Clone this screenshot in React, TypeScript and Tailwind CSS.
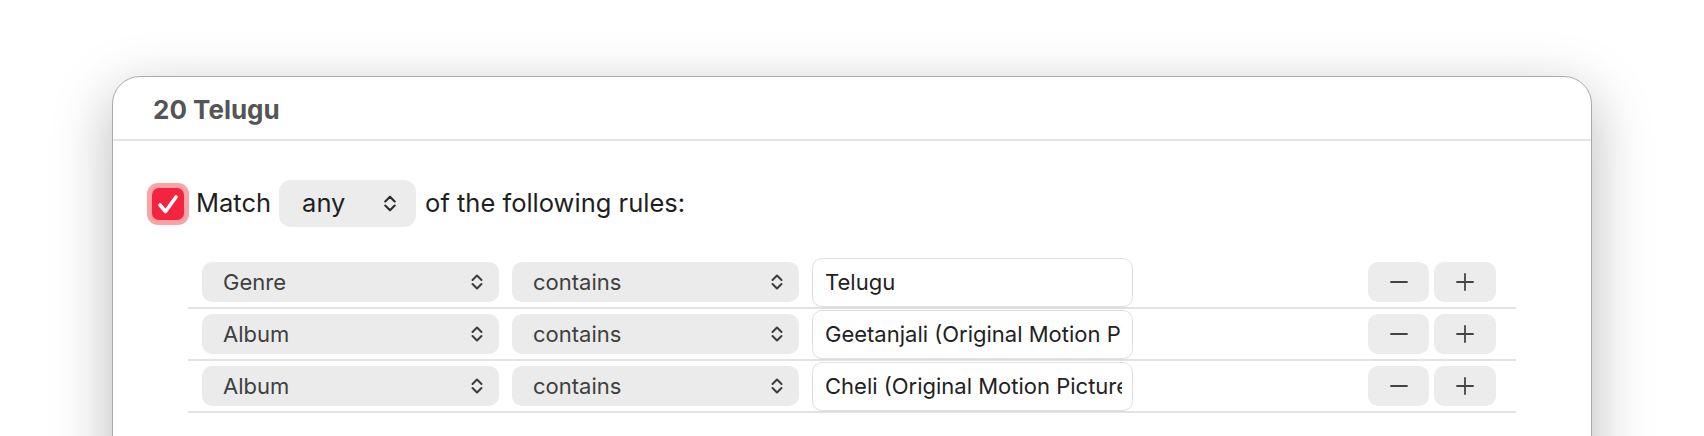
import React from 'react'

const RULES = [
  { field: 'Genre', op: 'contains', value: 'Telugu' },
  { field: 'Album', op: 'contains', value: 'Geetanjali (Original Motion Picture Soundtrack)' },
  { field: 'Album', op: 'contains', value: 'Cheli (Original Motion Picture Soundtrack)' },
]

function Chevrons({ className = '' }: { className?: string }) {
  return (
    <svg viewBox="0 0 14 18" className={className} fill="none" stroke="currentColor" strokeWidth="2" strokeLinecap="round" strokeLinejoin="round">
      <path d="M2.5 7 L7 2.5 L11.5 7" />
      <path d="M2.5 11 L7 15.5 L11.5 11" />
    </svg>
  )
}

function Select({ label, width }: { label: string; width: string }) {
  return (
    <div className={`${width} h-[40px] shrink-0 rounded-[10px] bg-[#ebebeb] flex items-center justify-between pl-[21px] pr-[15px] text-[22px] text-[#404040]`}>
      <span>{label}</span>
      <Chevrons className="w-[14px] h-[18px] text-[#3c3c3c]" />
    </div>
  )
}

export default function App() {
  return (
    <div className="w-[1704px] h-[436px] overflow-hidden bg-white pt-[76px] pl-[112px] font-['Inter','Liberation_Sans',sans-serif]">
      <div className="w-[1480px] h-[520px] rounded-t-[28px] border border-[#a9a9a9] bg-white shadow-[0_18px_60px_rgba(0,0,0,0.28)]">
        {/* title bar */}
        <div className="h-[64px] flex items-center pl-[40px] pt-[2px] border-b-2 border-[#e4e4e4]">
          <span className="text-[26px] font-bold text-[#555555]">20 Telugu</span>
        </div>

        <div className="pt-[39px]">
          {/* match line */}
          <div className="flex items-center pl-[34px] text-[25.5px] text-[#1f1f1f]">
            <div className="w-[42px] h-[42px] rounded-[11px] bg-[#f9a3a5] p-[5px]">
              <div className="w-full h-full rounded-[7px] bg-[#f4233f] flex items-center justify-center">
                <svg viewBox="0 0 32 32" className="w-[32px] h-[32px]" fill="none" stroke="white" strokeWidth="3.6" strokeLinecap="round" strokeLinejoin="round">
                  <path d="M8 17 L13.5 23.5 L24 9" />
                </svg>
              </div>
            </div>
            <span className="ml-[7px]">Match</span>
            <div className="ml-[8px] w-[137px] h-[47px] rounded-[12px] bg-[#ececec] flex items-center justify-between pl-[23px] pr-[18px]">
              <span>any</span>
              <Chevrons className="w-[16px] h-[19px] text-[#2c2c2c]" />
            </div>
            <span className="ml-[9px]">of the following rules:</span>
          </div>

          {/* rules */}
          <div className="mt-[30px] ml-[75px] w-[1328px]">
            {RULES.map((r, i) => (
              <div key={i} className="h-[52px] flex items-center border-b-2 border-[#e3e3e3] pl-[14px] pr-[20px]">
                <Select label={r.field} width="w-[297px]" />
                <div className="ml-[13px]">
                  <Select label={r.op} width="w-[287px]" />
                </div>
                <div className="ml-[13px] w-[321px] h-[49px] shrink-0 rounded-[10px] border border-[#e1e1e1] bg-white flex items-center pl-[12px] pr-[10px] overflow-hidden shadow-[0_1px_1px_rgba(0,0,0,0.03)]">
                  <span className="whitespace-nowrap overflow-hidden text-[22px] text-[#222222]">{r.value}</span>
                </div>
                <div className="ml-auto flex gap-[5px]">
                  <button className="w-[61px] h-[40px] rounded-[10px] bg-[#ececec] flex items-center justify-center">
                    <svg viewBox="0 0 18 18" className="w-[18px] h-[18px]" fill="none" stroke="#444" strokeWidth="1.8" strokeLinecap="round">
                      <path d="M1 9 H17" />
                    </svg>
                  </button>
                  <button className="w-[62px] h-[40px] rounded-[10px] bg-[#ececec] flex items-center justify-center">
                    <svg viewBox="0 0 18 18" className="w-[18px] h-[18px]" fill="none" stroke="#444" strokeWidth="1.8" strokeLinecap="round">
                      <path d="M1 9 H17 M9 1 V17" />
                    </svg>
                  </button>
                </div>
              </div>
            ))}
          </div>
        </div>
      </div>
    </div>
  )
}
